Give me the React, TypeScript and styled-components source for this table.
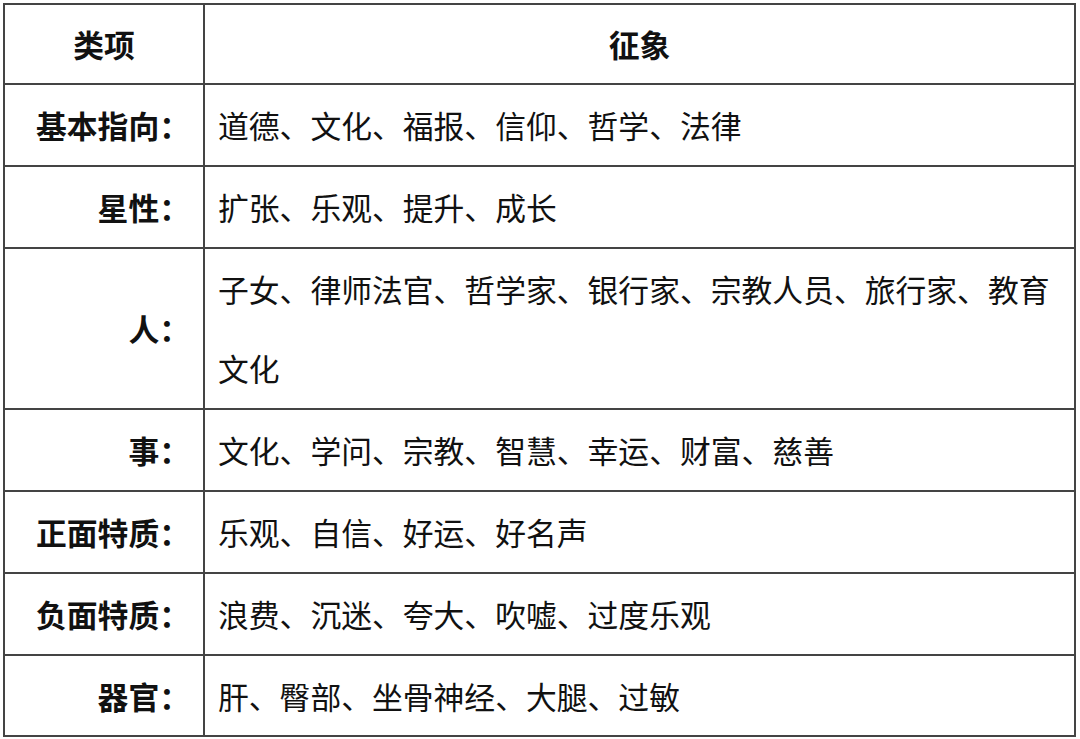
import React from "react";
import styled, { createGlobalStyle } from "styled-components";

const Global = createGlobalStyle`
  html, body { margin: 0; padding: 0; background: #fff; }
  body { font-family: "Noto Sans CJK SC", "Noto Sans", sans-serif; color: #111; }
`;

const Page = styled.div`
  padding: 3px 0 0 3px;
`;

const Table = styled.table`
  border-collapse: collapse;
  width: 1073px;
  table-layout: fixed;
  border: 2px solid #222;
`;

const Col = styled.col<{ $w?: number }>`
  width: ${(p) => (p.$w ? `${p.$w}px` : "auto")};
`;

const Row = styled.tr`
  border-bottom: 2px solid #555;
`;

const HeadCell = styled.th`
  border: 2px solid #444;
  height: 78px;
  padding: 0;
  font-size: 30.8px;
  font-weight: 700;
  text-align: center;
  vertical-align: middle;
  line-height: 40px;
  color: #111;
`;

const Label = styled.td`
  border: 2px solid #444;
  height: 78.7px;
  padding: 0 13px;
  font-size: 30.8px;
  font-weight: 700;
  text-align: right;
  vertical-align: middle;
  line-height: 79.8px;
  color: #111;
`;

const Value = styled.td`
  border: 2px solid #444;
  padding: 0 13px;
  font-size: 30.8px;
  font-weight: 400;
  text-align: left;
  vertical-align: middle;
  line-height: 79.8px;
  color: #111;
`;

const rows: [string, string][] = [
  ["基本指向：", "道德、文化、福报、信仰、哲学、法律"],
  ["星性：", "扩张、乐观、提升、成长"],
  ["人：", "子女、律师法官、哲学家、银行家、宗教人员、旅行家、教育文化"],
  ["事：", "文化、学问、宗教、智慧、幸运、财富、慈善"],
  ["正面特质：", "乐观、自信、好运、好名声"],
  ["负面特质：", "浪费、沉迷、夸大、吹嘘、过度乐观"],
  ["器官：", "肝、臀部、坐骨神经、大腿、过敏"],
];

export default function App() {
  return (
    <>
      <Global />
      <Page>
        <Table>
          <colgroup>
            <Col $w={200} />
            <Col />
          </colgroup>
          <thead>
            <Row>
              <HeadCell>类项</HeadCell>
              <HeadCell>征象</HeadCell>
            </Row>
          </thead>
          <tbody>
            {rows.map(([k, v]) => (
              <Row key={k}>
                <Label>{k}</Label>
                <Value>{v}</Value>
              </Row>
            ))}
          </tbody>
        </Table>
      </Page>
    </>
  );
}
